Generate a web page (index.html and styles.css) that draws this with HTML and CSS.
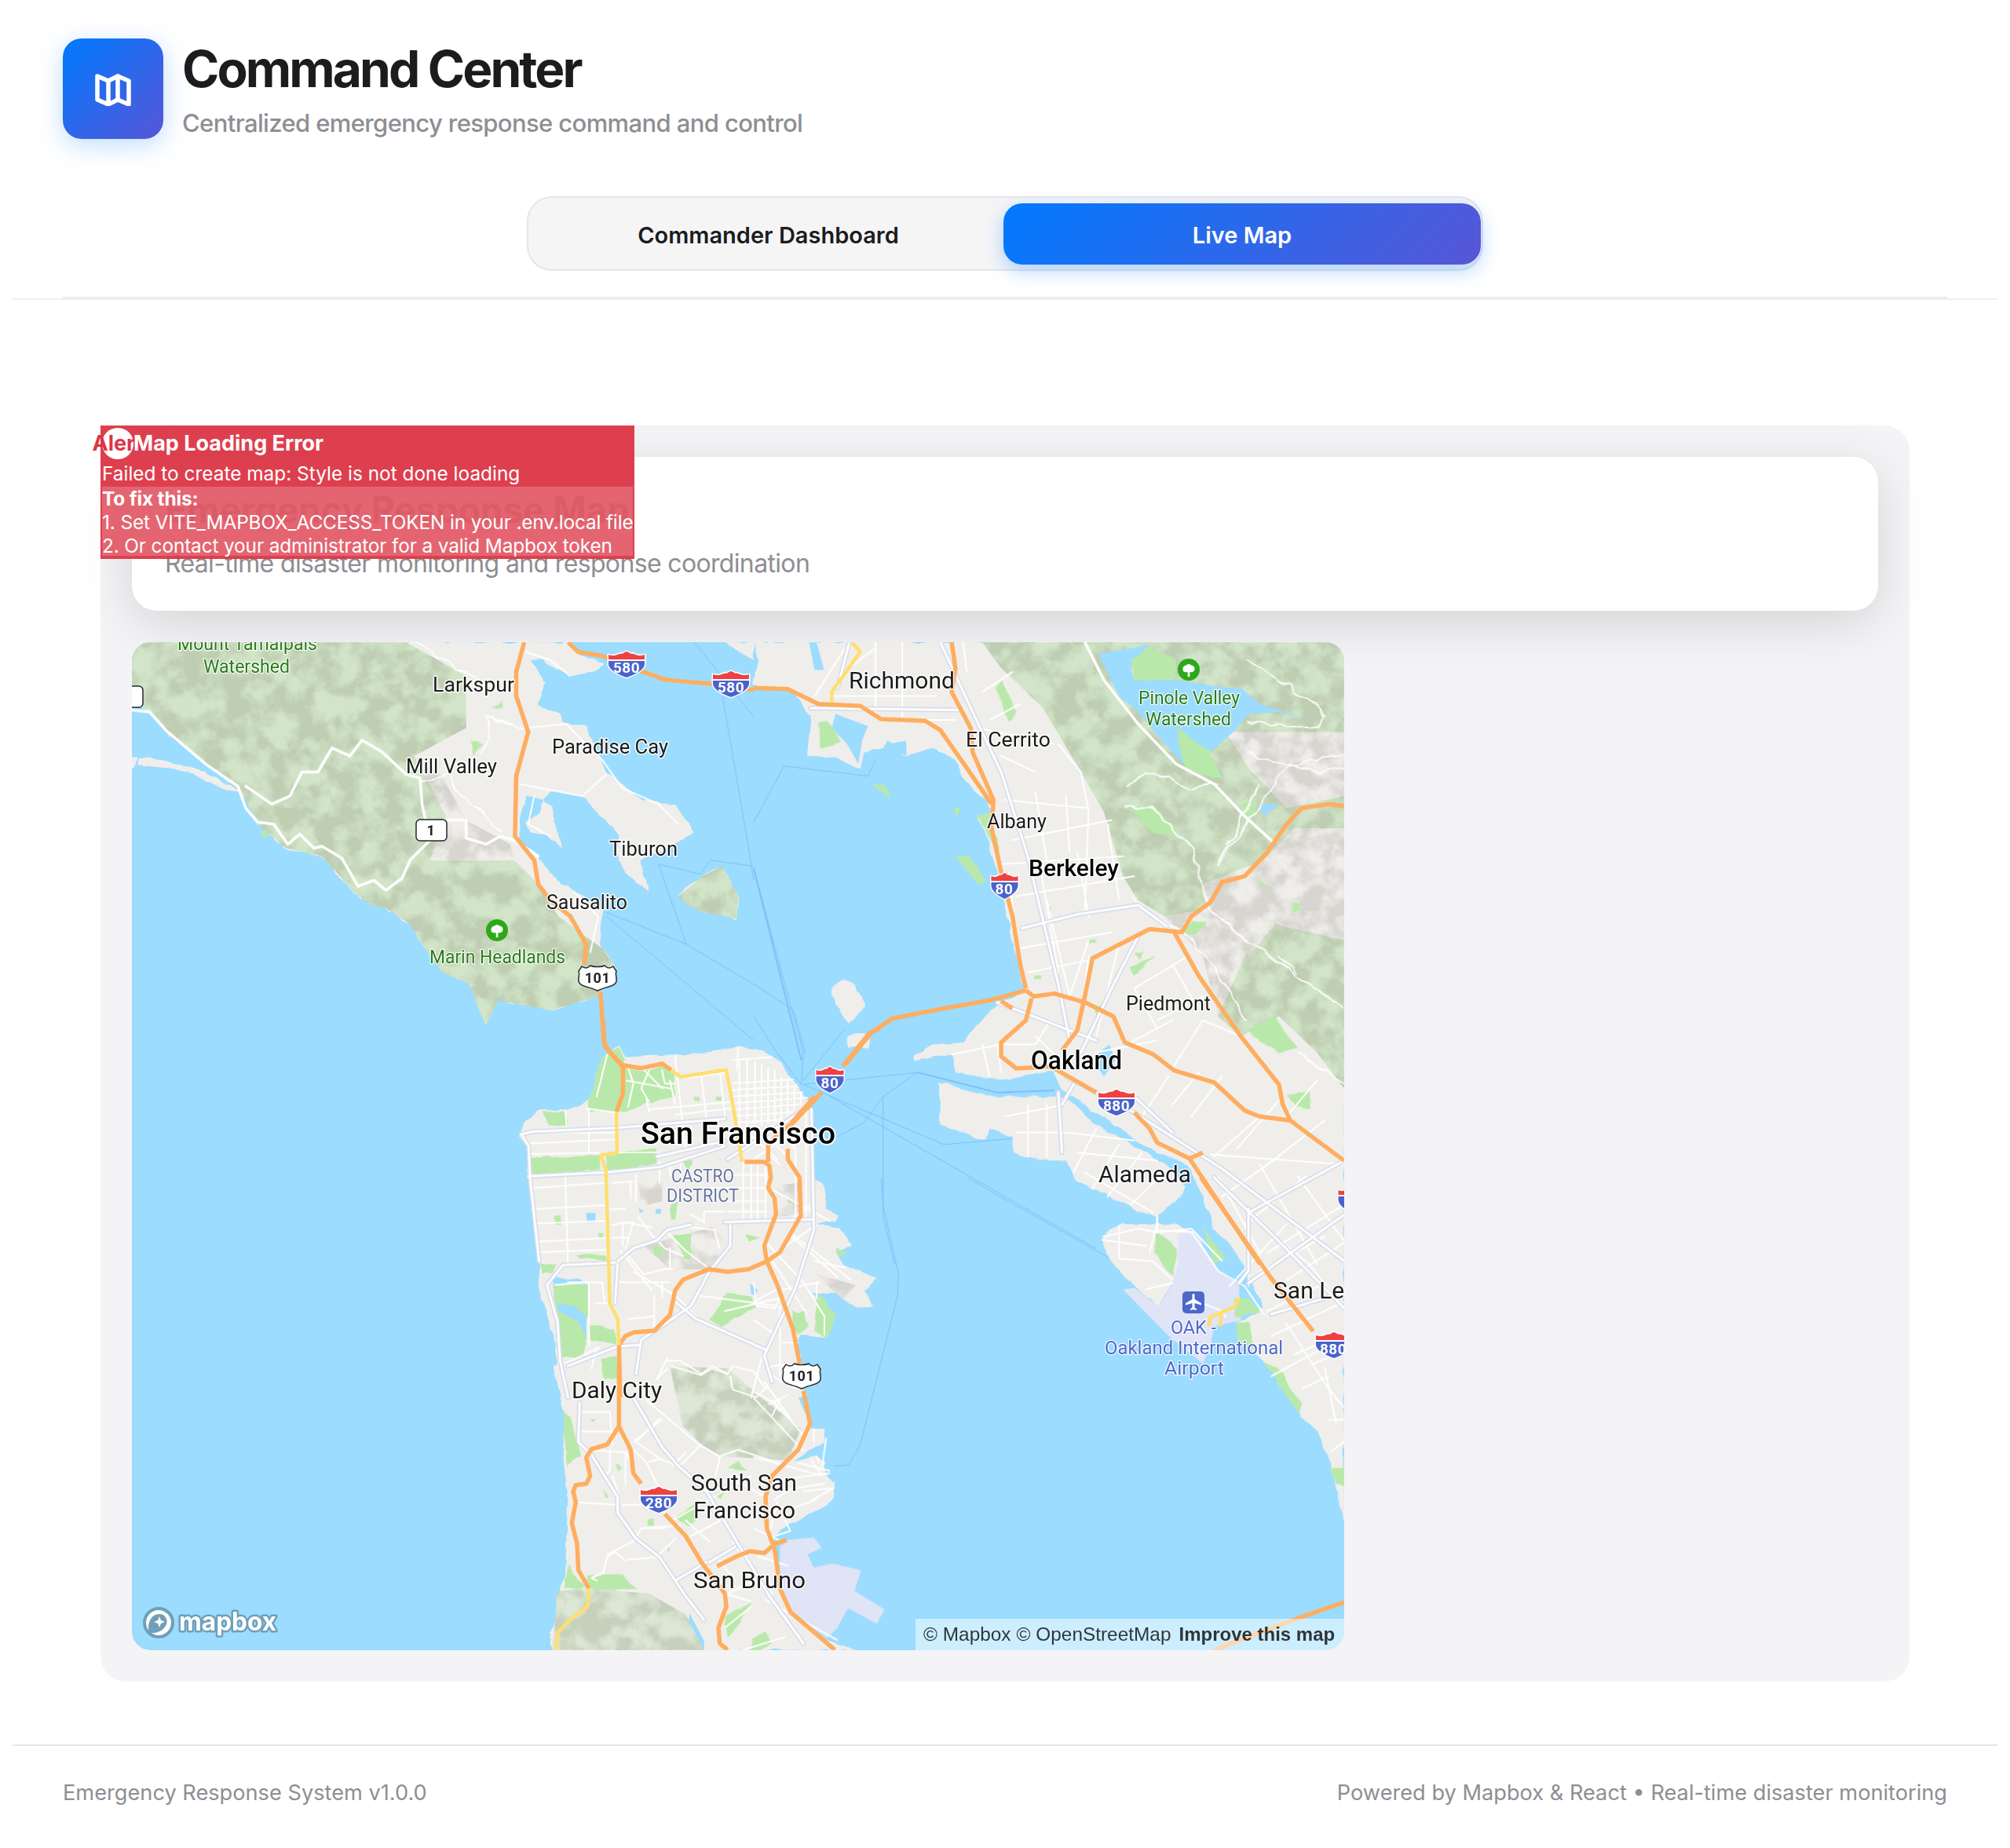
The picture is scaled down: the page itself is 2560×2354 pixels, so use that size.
FILE: index.html
```html
<!DOCTYPE html>
<html lang="en">
<head>
<meta charset="utf-8">
<title>Command Center</title>
<link rel="stylesheet" href="styles.css">
</head>
<body>
<div class="top">
  <header class="head">
    <div class="brand">
      <div class="logo">
        <svg class="logo-ico" viewBox="0 0 48 44"><path d="M4 6l14 6 12-6 14 6v30l-14-6-12 6-14-6z"/><path d="M18 12v30M30 6v30"/></svg>
      </div>
      <div class="brand-text">
        <h1 class="title">Command Center</h1>
        <p class="subtitle">Centralized emergency response command and control</p>
      </div>
    </div>
    <nav class="tabs">
      <button class="tab">Commander Dashboard</button>
      <button class="tab tab-on">Live Map</button>
    </nav>
  </header>
</div>

<main class="main">
  <section class="panel">
    <div class="error">
      <div class="error-head"><span class="error-badge">Alert</span><strong class="error-title">Map Loading Error</strong></div>
      <p class="error-msg">Failed to create map: Style is not done loading</p>
      <div class="error-help">
        <strong>To fix this:</strong>
        <div>1. Set VITE_MAPBOX_ACCESS_TOKEN in your .env.local file</div>
        <div>2. Or contact your administrator for a valid Mapbox token</div>
      </div>
    </div>
    <div class="card">
      <h2 class="card-title">Emergency Response Map</h2>
      <p class="card-sub">Real-time disaster monitoring and response coordination</p>
    </div>
    <div class="map">
      <svg class="map-svg" viewBox="168 818 1544 1284" xmlns="http://www.w3.org/2000/svg">
        <defs>
          <filter id="shade" filterUnits="userSpaceOnUse" x="168" y="818" width="1544" height="1284" color-interpolation-filters="sRGB">
            <feTurbulence type="fractalNoise" baseFrequency=".035" numOctaves="4" seed="7"/>
            <feColorMatrix values="0 0 0 0 .40  0 0 0 0 .38  0 0 0 0 .32  3 0 0 0 -.95"/>
            <feComponentTransfer><feFuncA type="discrete" tableValues="0 .02 .05 .08 .11 .14 .18"/></feComponentTransfer>
            <feComposite in2="SourceAlpha" operator="in"/>
          </filter>
          <filter id="rough" filterUnits="userSpaceOnUse" x="168" y="818" width="1544" height="1284" color-interpolation-filters="sRGB">
            <feTurbulence type="fractalNoise" baseFrequency=".05" numOctaves="2" seed="2" result="n"/>
            <feDisplacementMap in="SourceGraphic" in2="n" scale="7" xChannelSelector="R" yChannelSelector="G"/>
          </filter>
          <filter id="wiggle" filterUnits="userSpaceOnUse" x="168" y="818" width="1544" height="1284" color-interpolation-filters="sRGB">
            <feTurbulence type="fractalNoise" baseFrequency=".04" numOctaves="2" seed="11" result="n"/>
            <feDisplacementMap in="SourceGraphic" in2="n" scale="16" xChannelSelector="R" yChannelSelector="G"/>
          </filter>
          <g id="woodNW" class="t-nw"><path d="M16,16H700L850,100 850,230 720,300 800,450 760,560 970,560 1020,610 1080,700 1190,780 1225,830 1180,900 1110,920 1060,935 930,910 900,970 880,930 860,870 790,840 740,770 710,720 650,680 610,670 570,640 490,550 400,530 330,470 290,390 200,320 110,250 60,185 16,170Z"/><path d="M1380,650L1440,600 1490,575 1530,650 1525,705 1440,690 1400,670Z"/></g>
          <g id="woodNE" class="t-ne"><path d="M600,16H1551V1130L1480,1040 1380,950 1280,1000 1220,950 1180,800 1080,700 1010,660 970,600 920,440 860,340 760,180 650,80Z"/></g>
          <g id="woodS" class="t-s"><path d="M640,0L860,10 1000,130 1140,240 1090,360 830,345 760,300 690,230 660,100Z"/><path d="M210,860L330,850 560,870 700,950 770,1085H190Z"/></g>
          <symbol id="ishield" viewBox="0 0 50 37" preserveAspectRatio="none">
            <path class="sh-w" d="M1,5C7,7 12,6 17,3 20,5 22,1 25,1 28,1 30,5 33,3 38,6 43,7 49,5V18C49,26 36,32 25,36 14,32 1,26 1,18Z"/>
            <path class="sh-r" d="M2,6C7,8 12,7 17,4.500 20,6 22,2 25,2 28,2 30,6 33,4.500 38,7 43,8 48,6V12H2Z"/>
            <path class="sh-b" d="M2,14H48V18C48,25 36,31 25,35 14,31 2,25 2,18Z"/>
          </symbol>
          <symbol id="ushield" viewBox="0 0 52 36">
            <path class="sh-u" d="M6,3C10,6 14,5 17,2 21,4 31,4 35,2 38,5 42,6 46,3L50,9C48,13 51,17 50,22 49,29 35,29 26,34 17,29 3,29 2,22 1,17 4,13 2,9Z"/>
          </symbol>
          <symbol id="park-ico" viewBox="0 0 30 30">
            <circle class="ico-green" cx="15" cy="15" r="14"/>
            <path class="ico-white" d="M13.700 24V18C10 19 7 17.500 7.500 14.500 7 11.500 10 9.500 12 9.500 13 7.500 17 7.500 18 9.500 21 9.500 23 12 22.500 14.500 22.500 17.500 19 19 16.300 18V24Z"/>
          </symbol>
        </defs>

        <!-- land -->
        <g class="land" filter="url(#rough)">
          <g class="t-nw">
            <path d="M16,16H1100L1150,55 1200,65 1170,90 1110,100 1040,60 1010,60 1050,120 1030,170 1080,195 1090,215 1150,225 1200,340 1290,410 1370,420 1420,490 1390,510 1285,565 1305,640 1250,590 1225,540 1230,495 1140,400 1070,385 1040,410 1065,430 1090,530 1050,500 1010,490 1000,470 1030,440 1045,410 1000,395 985,450 985,510 1030,550 1060,590 1090,620 1130,640 1190,690 1185,770 1225,830 1180,900 1110,920 1060,935 930,910 900,970 880,930 860,870 790,840 740,770 710,720 650,680 610,670 570,640 490,550 400,530 330,470 290,390 200,320 110,250 60,185 16,170Z"/>
            <path d="M30,305L100,310 200,340 290,390 250,385 150,335 30,322Z"/>
            <path d="M16,298L28,300 24,325 16,332Z"/>
            <path d="M1380,650L1440,600 1490,575 1530,650 1525,705 1440,690 1400,670Z"/>
            <path d="M1500,16H1568V60L1530,40Z"/>
          </g>
          <g class="t-ne">
            <path d="M0,110L10,60 0,16H1551V1568H1300L1210,1480 1180,1400 1140,1320 1040,1280 900,1190 810,1130 790,1085 650,1110 530,1090 520,1045 425,1062 420,1050 470,1020 550,1015 600,955 650,915 710,885 690,800 660,680 640,590 610,500 585,455 625,440 610,410 560,370 530,310 470,280 400,300 350,265 340,280 290,290 280,330 200,300 140,300 150,200 100,135 0,125Z"/>
            <path d="M485,1115L630,1150 800,1150 830,1160 900,1220 1030,1290 1100,1330 1130,1380 1120,1400 1060,1450 1000,1430 850,1360 820,1310 750,1310 680,1290 680,1250 620,1230 610,1260 490,1220Z"/>
            <path d="M205,880L235,860 265,870 295,925 250,970 215,920Z"/>
            <path d="M245,1000L305,990 300,1030 250,1030Z"/>
          </g>
          <g class="t-sf">
            <path d="M380,140L440,100 470,140 650,130 800,120 900,100 1000,115 1060,160 1130,250 1180,330 1190,560 1195,610 1225,620 1240,720 1280,740 1270,765 1190,780 1280,790 1340,860 1280,880 1300,930 1430,985 1380,1030 1420,1090 1350,1100 1270,1040 1190,1040 1215,1070 1270,1130 1240,1210 1140,1200 1120,1230 1140,1310 1160,1440H230L190,1190 135,1010 140,920 100,590 95,480 65,435 80,390 140,345 240,345 330,310Z"/>
          </g>
          <g class="t-s">
            <path d="M195,0L240,200 230,340 250,500 240,800 210,860 215,960 180,1020 190,1085H1350L1220,1040 1130,950 1090,940 1060,850 1040,650 1090,610 1140,590 1260,510 1270,450 1225,395 1230,360 1200,345 1110,365 1175,320 1230,295 1230,240 1180,240 1175,210 1130,120 1085,120 1070,95 1160,0Z"/>
          </g>
          <g class="t-se">
            <path d="M1180,0L1210,110 1205,130 1290,290 1340,420 1290,460 1265,470 1310,560 1340,590 1440,770 1480,820 1510,900 1551,1110V0Z"/>
            <path d="M915,190L965,150 1115,150 1160,175 1220,300 1230,320 1115,340 1100,340 1065,415 990,340 935,260Z"/>
          </g>
        </g>

        <!-- inland water -->
        <g class="water">
          <g class="t-ne">
            <path d="M145,16H165L185,85 160,85Z"/>
            <path d="M215,195L300,225 285,260 275,320 245,270 205,230Z"/>
            <path d="M350,270L400,262 402,298 365,290Z"/>
          </g>
          <g class="t-s"><path d="M715,945L770,1050V1085H720L705,1040Z"/></g>
        </g>

        <!-- airports -->
        <g class="air">
          <g class="t-s"><path d="M1060,690L1090,665 1190,655 1220,695 1165,720 1190,770 1260,755 1370,780 1345,860 1460,930 1430,985 1320,925 1280,1000 1240,1040 1100,940 1060,850Z"/></g>
          <g class="t-se"><path d="M1115,180L1160,175 1220,300 1275,345 1280,460 1210,480 1200,540 1180,600 1090,510 970,360 1000,355 1065,415 1100,340 1115,280Z"/></g>
        </g>

        <!-- woods and hillshade -->
        <g class="wood"><use href="#woodNW"/><use href="#woodNE"/></g>
        <g class="wood-l"><use href="#woodS"/></g>
        <g class="land">
          <g class="t-ne">
            <path d="M1180,620L1340,560 1380,640 1300,780 1220,950 1170,830 1080,700 1200,680Z"/>
            <path d="M1240,240H1551V400L1400,430 1300,330Z"/>
            <path d="M1420,480H1551V760L1370,720 1300,800 1210,640 1300,600Z"/>
          </g>
          <g class="t-nw"><path d="M790,350L850,460 960,520 970,560 760,560 800,450Z"/></g>
        </g>

        <g class="shade-src" filter="url(#shade)">
          <use href="#woodNW"/><use href="#woodNE"/><use href="#woodS"/>
          <g class="t-sf"><path d="M520,620L610,600 610,690 530,710Z"/><path d="M540,860L800,790 860,850 790,950 640,950Z"/><path d="M1050,630L1130,620 1130,740 1050,750Z"/><path d="M1200,970L1350,1010 1300,1070Z"/></g>
          <g class="t-nw"><path d="M700,16L850,100 850,230 720,300 790,350 850,460 960,520 970,560 760,560 720,300Z"/></g>
        </g>

        <g class="water">
          <g class="t-ne">
            <path d="M905,45L1000,30 1040,20 990,80 1000,110 1110,110 1240,130 1280,130 1330,170 1460,210 1380,190 1300,195 1260,240 1200,290 1130,320 1080,270 1010,190 960,150Z"/>
            <path d="M905,1040L935,1020 950,1060 920,1100 905,1080Z"/>
            <path d="M1330,420L1380,420 1340,450Z"/>
          </g>
        </g>

        <!-- parks -->
        <g class="park" filter="url(#rough)">
          <g class="t-sf">
            <path d="M380,140L440,105 470,150 460,180 530,190 610,175 655,200 660,290 550,315 460,350 330,345 330,310Z"/>
            <path d="M155,350L240,350 250,405 180,400Z"/>
            <path d="M105,525L370,515 375,570 190,585 115,590Z"/>
            <path d="M395,515L590,490 590,545 400,575Z"/>
            <path d="M190,1010L330,1010 320,1220 215,1140Z"/>
            <path d="M215,1140L320,1215 310,1280 225,1290Z"/>
            <path d="M335,1160L430,1180 430,1240 335,1220Z"/>
            <path d="M380,1290L440,1280 440,1370 380,1365Z"/>
            <path d="M790,1140L860,1040 950,1050 970,1100 920,1120 840,1170Z"/>
            <path d="M1100,1130L1150,1110 1170,1170 1130,1200Z"/>
            <path d="M1200,1060L1275,1130 1240,1210 1190,1190Z"/>
            <path d="M655,820L720,810 720,910 690,910Z"/>
            <path d="M690,530L730,535 710,570 690,565Z"/>
            <path d="M570,865L615,860 610,895 585,900Z"/>
            <path d="M140,925L210,930 190,965 145,965Z"/>
            <path d="M280,895L400,895V915H300Z"/>
            <path d="M925,815L985,830 940,845Z"/>
            <path d="M730,295H750V310H730ZM815,290H838V303H815ZM200,745H225V780H200ZM1090,675H1103V695H1090ZM365,815H380V830H365ZM640,710L670,690 660,760 640,760Z"/>
          </g>
          <g class="t-s">
            <path d="M230,170L260,200 300,340 245,380Z"/>
            <path d="M250,760L320,850H235Z"/>
            <path d="M330,800L460,795 510,855H330Z"/>
            <path d="M660,580L730,530 745,590 710,610Z"/>
            <path d="M850,960L950,900 910,980 860,1040Z"/>
            <path d="M950,1040L1000,1010 1030,1060 980,1085H945Z"/>
            <path d="M860,390L900,360 935,405Z"/>
            <path d="M810,490L850,480 830,515Z"/>
            <path d="M330,200H355L345,215ZM555,590H578V610H555ZM625,695L640,700 630,715ZM380,470L405,500 395,510ZM430,375L460,385 445,400Z"/>
          </g>
          <g class="t-nw">
            <path d="M1170,1170L1195,1040 1240,1070 1225,1190Z"/>
            <path d="M860,260L890,270 870,300Z"/>
            <path d="M915,180L945,160 940,180Z"/>
            <path d="M335,490L355,485 350,505Z"/>
          </g>
          <g class="t-ne">
            <path d="M530,550L565,548 610,610 590,620Z"/>
            <path d="M170,215L190,210 235,265 175,280Z"/>
            <path d="M1110,230L1200,290 1230,360 1180,350 1130,320Z"/>
            <path d="M990,60L1040,30 1110,60 1110,110 1000,110Z"/>
            <path d="M1290,985L1370,950 1425,1030 1380,1040Z"/>
            <path d="M1400,1145L1460,1135 1465,1180 1420,1175Z"/>
            <path d="M985,830L1055,800 1000,850Z"/>
            <path d="M985,430L1060,430 1120,500 1050,490Z"/>
            <path d="M635,130L655,110 690,190 670,215Z"/>
            <path d="M585,450L620,440 650,560 620,510Z"/>
            <path d="M1150,710L1190,715 1160,750 1135,745Z"/>
            <path d="M1280,420L1310,410 1320,450 1290,445Z"/>
            <path d="M310,370L340,372 360,405 330,390Z"/>
            <path d="M525,430L545,435 530,455Z"/>
            <path d="M895,930L915,920 905,950ZM1000,790L1020,785 1015,810ZM770,680L780,680 778,700ZM735,850H755V860H735ZM880,760H900V770H880ZM1320,610L1345,620 1340,635ZM1415,665H1435V685H1415Z"/>
          </g>
          <g class="t-se">
            <path d="M1060,170L1115,230 1100,320 1050,240Z"/>
            <path d="M1340,590L1380,620 1440,730 1430,760Z"/>
            <path d="M1515,935H1551V1000L1530,990Z"/>
            <path d="M1265,470L1300,470 1320,560 1270,530Z"/>
            <path d="M1260,385L1300,390 1335,430 1265,450Z"/>
            <path d="M1180,160L1240,260 1210,280Z"/>
            <path d="M170,370L215,440 190,510Z"/>
            <path d="M95,430L145,470 115,490Z"/>
            <path d="M220,225L250,240 225,250Z"/>
          </g>
        </g>
        <g class="water">
          <g class="t-sf">
            <path d="M190,975L250,990 290,985 325,1010 250,1003 195,1015Z"/>
            <path d="M205,1080L270,1090 320,1130 320,1210 290,1150 215,1110Z"/>
            <path d="M320,735H355V770H322ZM945,1005L975,1030 965,1050 950,1045ZM520,715L540,730 525,735ZM585,720H605V738H585Z"/>
          </g>
        </g>

        <!-- ferry lines -->
        <g class="ferry">
          <g class="t-nw"><path d="M1490,150L1550,500 1568,610M1330,570L1400,770 1568,870M1200,690L1400,770M1200,700L1568,1010M1330,570L1435,595 1460,560 1568,575M1420,16L1550,180 1568,200"/></g>
          <g class="t-ne"><path d="M0,580L130,1040 125,1120M0,870L105,935 135,1040M0,950L60,1040 125,1120M240,980L130,1110M130,1120L430,1090 640,1140 790,1135M130,1120L500,1270 680,1255M200,1150L900,1530M430,1090L340,1150 290,1215 220,1250M340,1150V1450L370,1568M0,465L80,325 300,350 320,310"/></g>
          <g class="t-se"><path d="M560,0L935,260M335,0L340,90 380,310 378,380 280,860 250,925 210,930"/></g>
        </g>
        <g class="ferry-bold"><g class="t-ne"><path d="M0,580L125,1060M430,1090L640,1140 790,1135"/></g></g>

        <!-- winding hill roads -->
        <g class="minor" filter="url(#wiggle)">
          <g class="t-nw">
            <path d="M735,360L800,350 860,420 940,490M1000,235L900,200 910,250 880,300M720,16L900,120 970,140"/>
          </g>
          <g class="t-ne">
            <path d="M980,370L1040,340 1150,380 1220,370M980,430L1050,430 1150,530 1200,680 1300,770 1400,830 1551,930M1375,800L1430,840M1220,570L1400,330 1550,290M1300,60L1480,170 1500,200 1480,230 1400,225 1300,215M1300,290L1470,340 1551,330M1000,660L1160,770 1300,960M1430,1040L1551,1120M1250,520L1330,370"/>
          </g>
        </g>

        <!-- minor roads -->
        <g class="minor">
          <g class="t-nw">
            <path class="hwy" d="M16,185L60,190 100,235 200,320 280,375 300,430 330,465 370,470 405,520 435,495 470,530 490,525 540,555 580,625 620,610 650,635 690,605 710,560 760,510 740,420 735,355 700,345 640,290 590,260 560,300 515,280 480,340 440,340 410,400 365,420 300,375"/>
            <path class="hwy" d="M800,460L850,460 850,505 900,520 935,500 970,510 1030,550"/>
            <path d="M1000,230L1100,220 1190,310 1240,380 1330,420 1380,470M985,370L1140,400 1200,345M1020,400L1005,470 1060,500M1110,100L1060,60 1000,40"/>
            <path d="M1120,640L1180,700 1160,790M1290,1080L1340,1130M1250,1110L1360,1130M1150,1180L1225,1190M1000,1240H1225M1230,1290L1330,1290"/>
          </g>
          <g class="t-ne">
            <path class="hwy" d="M870,16L920,110 1010,220 1110,320 1210,370 1290,450 1365,515"/>
            <path d="M160,150L240,30M250,80L320,30M320,16V200M390,16V220M340,210H530M210,150H480M550,16L560,90M600,140L680,90M620,210L700,170M650,300L740,340M590,230L790,270M800,270L860,340M660,410L880,430M680,510L940,460M650,570L970,550M690,650L1000,600M670,590L700,830M750,560L800,840M850,540L880,700M930,470L960,660M740,390L770,560M820,400L830,540M860,340L880,440M880,430L870,690"/>
            <path d="M700,780L940,740M720,840L880,810M770,660L830,900M830,900L880,760M880,800L860,960M960,770L900,1000M1000,880L1140,800M1000,880L1060,980M1060,960L1180,900M1100,820L1160,920M980,1020L1100,960M1100,1080L1180,960M1180,960L1280,1000"/>
            <path d="M520,1045L650,1020 740,1020M600,1020L620,1100M640,1020L650,1090M740,1020L780,960M740,1000L820,1070M900,1040L1060,1010M1020,1200L1090,1100M1100,1170L1170,1090M1150,1200L1230,1100M1210,1300L1330,1200M1270,1280L1380,1160M1400,1200L1480,1110M1350,1320L1500,1210M1200,1295L1551,1320"/>
            <path d="M660,1200L820,1170M690,1240H820M720,1170V1300M770,1170V1300M820,1240L1000,1260M850,1290L1060,1310M900,1230L840,1340M960,1270L890,1380M1020,1290L930,1400M1080,1340L990,1420M870,1340L1050,1440M1060,1450V1490L1150,1480 1230,1560M920,1500L1010,1480 1060,1490M1230,1400L1380,1300M1290,1470L1450,1350M1350,1540L1551,1420M1220,1350L1330,1540M1330,1320L1480,1568M1430,1350L1551,1510"/>
          </g>
          <g class="t-sf">
            <path d="M100,470L430,455M100,510L370,505M110,640L400,620M120,720L400,705M130,775L400,765M140,845L410,830M140,885L410,875M240,600L250,930M330,340V500M240,345L245,400M420,620L500,615M510,590V690M490,620V680M410,720H470M420,830L480,830M420,780L490,770M460,770V860M500,770L470,870"/>
            <path d="M660,140L700,500M760,210L780,380M830,190L850,370M560,340L880,310M660,360L880,335M700,220L850,200M550,300L560,350M640,230L660,320M480,180L500,240 480,330M560,190L530,260 560,310M610,190L620,240 660,240M400,130L360,290M880,150L1030,140M900,110L895,190"/>
            <path d="M880,240L1110,225M880,265L1125,250M885,290L1145,275M885,315L1165,295M885,340L1140,320M888,365L1110,350M890,390L1060,380M905,150V400M935,150V400M965,160V390M990,170V400M1015,180V390M1040,190V390M1065,220V380M1090,230V360M1115,250V340M1140,280V320"/>
            <path d="M950,440L1050,530M990,420L1080,510M1030,400L1120,490M930,500L1060,400M960,530L1110,420M1000,500L1060,550M1120,500V770M1160,350V760"/>
            <path d="M920,540V770M950,540V770M975,540V770M1005,540V770M860,590H1010M860,640H1010M860,690H1010M860,730H1010M770,640H860M770,730V770M600,540V620M640,540V590M680,530V590M720,740L770,770M770,730H850"/>
            <path d="M450,880L570,1030M480,900L540,970 620,950 650,950M520,750L570,820 620,870 690,900M620,800L700,880 780,940M720,790L810,800 830,870M640,870L640,950M460,770L570,790M500,960L660,1050 740,1130M430,1000H640M610,1000V1060M580,1050V1170M1040,890L1200,780M1000,840L1150,1000 1230,1130 1230,1200M1110,820L1330,990M1060,1030L1210,1000M1200,1000L1200,1060M960,1000L970,1090 1040,1100 1060,1060M850,1110L1060,1060M740,1050L1050,1090M360,1080H430M250,1000L380,1000 390,1080M200,1010L330,1000 330,1240M480,1140L580,1130M360,1250L340,1330M240,1310L370,1250"/>
            <path d="M630,1290L590,1370M630,1300L680,1300 760,1350 800,1320 860,1350 880,1320 960,1340 1000,1400M1070,1230H1130M1060,1230V1340 1090,1360M950,1440L990,1290 1060,1140"/>
          </g>
          <g class="t-s">
            <path d="M630,10L590,50M640,0L680,10 760,35 800,10 860,30M870,40L880,90 970,120 1010,80M1000,60L1100,200M1030,130L1060,170M1030,190L1060,130M550,130L750,300 830,345 900,320 1070,375M600,200L510,290 610,360 670,380M760,300L680,380M700,330L650,380M830,350L810,440M870,420L1000,500M1130,370L1250,400M1230,450L1100,470 1040,510M1200,510L1120,540M300,175L410,175 420,300M300,250H420M310,320L470,330 490,360M410,320V400L390,420M280,520L430,530M420,420L450,510M470,330V450M460,530L590,530 650,590 860,470 950,420M500,290L610,205M560,365L610,355M500,320L550,370 600,470M530,620L680,610M400,720L500,670 530,620 620,620M470,745L430,710 400,730 385,790 340,810 360,820M480,740L590,730M590,730L660,660M720,650L890,560M880,670L890,700M810,740L870,690M890,690L1030,870M820,730L880,810M935,720L1000,860M700,590L790,670M860,870L1000,800M850,870L950,900M1010,440L1250,410M1190,240V290M1210,370L1200,345M1050,520L1020,640M1080,590L1100,630 1040,650M850,1000L950,920M920,1085L1080,1035"/>
          </g>
          <g class="t-se">
            <path d="M1060,120V170L1150,175 1220,300 1290,350 1340,440M960,155L960,260 1050,270 1100,330M1030,360L1100,340M1060,150L1040,240M915,200L1030,220M1170,400L1230,430 1240,450M1300,350L1300,100M1250,350L1400,150M1330,300L1500,190M1400,330L1551,210M1300,120L1460,280 1551,420M1350,430L1500,340M1360,510L1551,400M1400,470L1510,680 1551,740M1420,570L1551,500M1470,600L1551,560M1440,680L1510,640M1520,880L1551,850M1510,780H1551M1500,610L1530,790M1360,640L1480,560"/>
            <path d="M60,130L20,220 60,290 140,440M0,400L60,360M0,460L50,500 25,590 50,640 110,680M50,40L200,140M90,140L150,90M100,190L220,320M160,270L240,290M40,610L90,600M0,690L60,730 110,800 130,830M0,710L130,880M40,730L90,700M0,900L180,960 150,910M180,930L190,840M130,1010L210,1000 150,1040M0,1130L70,1170M10,1220L90,1250M30,1360L220,1490"/>
          </g>
        </g>

        <!-- secondary roads -->
        <g id="secondary">
          <g class="casing">
            <g id="sec-shape">
              <g class="t-sf"><path d="M70,435L110,425 440,410 850,375M100,595L400,580 600,560 850,480M75,440L100,480 105,600 140,920M230,935L170,1010 210,1150 220,1300 250,1440M230,935L430,925M440,930L430,1080M440,920L500,870 590,840 630,800 720,780M1180,340L1190,800 1120,1020 1000,1280 1030,1380M850,770L1180,760M870,780V860L790,960 720,1090 620,1160 530,1220 510,1350M660,1075L740,1140 1010,1260M250,1320L440,1245 520,1240M1170,330L860,530M590,520L850,460"/></g>
              <g class="t-s"><path d="M295,140L290,290 340,340 440,500 440,560 510,660 600,730 700,880 770,970M500,120L610,310 670,380 780,480 900,680 1020,880 1150,1060M790,750L890,690M660,820L780,750"/></g>
              <g class="t-ne"><path d="M490,16L580,200 650,340 720,550 800,870 830,1010M705,730L850,695 1010,672 1085,725M640,915L830,985 900,1010M1010,750L940,880 860,1040M820,1100L1000,1190 1230,1330 1551,1560M800,1140L810,1290M840,1120L810,1170M1300,1440L1551,1310M150,180L540,185M220,130L250,20M1000,1150L1100,1240"/></g>
              <g class="t-se"><path d="M1300,100V300L1275,340M1210,0L1400,230 1551,420M1300,340L1551,120M1360,440L1551,370"/></g>
            </g>
          </g>
          <g class="fill"><use href="#sec-shape"/></g>
        </g>

        <!-- motorways -->
        <g class="moto">
          <g class="t-nw"><path d="M995,16L975,90 975,150 1005,240 975,350 972,500 1020,560 1030,620 1060,660 1110,700 1150,770 1145,820M1185,890L1195,1020 1240,1075"/><path d="M1105,16L1130,40 1190,50 1250,75 1350,110 1465,120 1568,135"/></g>
          <g class="t-ne"><path d="M0,130L90,133 170,170 280,175 335,208 450,212 490,235 560,330 625,420M520,16L530,80 520,140 570,230 575,290 630,410 625,480 650,590 680,700 700,820 715,880M715,885L620,910 500,930 365,955 310,990 240,1070M160,1150L100,1215M1550,425L1510,420 1440,430 1400,470 1350,540 1290,600 1230,615 1200,665 1150,700 1125,740 1040,732 890,805 870,900 850,985 810,1035M715,885L735,900 790,893 870,915 945,950 975,1015 1050,1045 1105,1085 1210,1115 1290,1185 1330,1200 1410,1210 1551,1310M1105,740L1170,850 1280,1000 1380,1120 1390,1170 1410,1210M730,905L715,960 650,1015 650,1050 690,1080 780,1075 900,1140M1000,1190L1040,1230 1060,1265 1145,1305 1330,1568M1145,1305L1180,1290M650,912L680,930"/></g>
          <g class="t-sf"><path d="M385,0L390,95 430,145 460,170 530,182 610,165 645,190M460,170V280L435,350M925,540H1000L1020,555 1025,600 1015,640 1040,680 1045,740 1000,860 1010,920 1050,1010 1110,1180 1135,1310M445,1240L450,1440M445,1240L470,1205 500,1192 580,1185 640,1125 660,1030 690,990 790,950 860,960 940,950 1010,920 1060,885 1140,745 1135,600 1090,530 1090,490M1440,30L1400,50 1300,175M1220,275L1110,390 1040,445 1015,480 1015,540"/></g>
          <g class="t-s"><path d="M1150,95L1175,220 1130,320 1030,420 1005,500 1010,620 1040,700 1060,850 1100,940 1270,1085M820,765L900,725 945,708 1000,715 1040,680 1085,665M445,0V230L400,300 340,318 320,350 335,420 320,450 280,455 270,480 280,520 265,600 285,680 290,780 330,850M445,230L490,320 500,410 530,450M620,565L700,650 760,750 850,870 855,920 825,1000 830,1060 860,1085"/></g>
          <g class="t-se"><path d="M1175,0L1360,325 1470,495M1551,1368L1430,1420 1300,1480 1210,1522"/></g>
        </g>
        <g class="trunk">
          <g class="t-sf"><path d="M645,190L680,215 855,188 885,350 915,540M435,350L438,505 375,515 395,570 410,1080 440,1140 445,1240"/></g>
          <g class="t-s"><path d="M330,850L325,920 270,960 210,1020 205,1085"/></g>
          <g class="t-ne"><path d="M205,165V140L280,40 258,16"/></g>
          <g class="t-se"><path d="M1275,385L1265,415 1200,450 1195,480M1230,430L1225,480"/></g>
        </g>

        <!-- shields -->
        <use href="#ishield" x="773" y="828" width="50" height="37"/>
        <use href="#ishield" x="906" y="853" width="50" height="37"/>
        <use href="#ishield" x="1261" y="1110" width="37" height="37"/>
        <use href="#ishield" x="1038" y="1357" width="38" height="37"/>
        <use href="#ishield" x="1397" y="1386" width="50" height="37"/>
        <use href="#ishield" x="1703" y="1510" width="38" height="37"/>
        <use href="#ishield" x="1674" y="1695" width="50" height="37"/>
        <use href="#ishield" x="814" y="1892" width="50" height="37"/>
        <use href="#ushield" x="735" y="1228" width="52" height="36"/>
        <use href="#ushield" x="995" y="1735" width="52" height="36"/>
        <rect class="sh-ca" x="530" y="1044" width="39" height="27" rx="5"/>
        <rect class="sh-ca" x="150" y="874" width="32" height="27" rx="5"/>

        <g class="sh-t-w">
          <text x="798" y="857">580</text>
          <text x="931" y="882">580</text>
          <text x="1279" y="1139">80</text>
          <text x="1057" y="1386">80</text>
          <text x="1422" y="1415">880</text>
          <text x="1698" y="1725">880</text>
          <text x="839" y="1921">280</text>
        </g>
        <g class="sh-t-k">
          <text x="761" y="1252">101</text>
          <text x="1021" y="1759">101</text>
          <text class="sh-t-s" x="549" y="1064">1</text>
        </g>

        <!-- poi icons -->
        <use href="#park-ico" x="618" y="1170" width="30" height="30"/>
        <use href="#park-ico" x="1499" y="838" width="30" height="30"/>
        <rect class="ico-air" x="1506" y="1645" width="28" height="28" rx="5"/>
        <path class="ico-white" d="M1518.500,1649C1518.500,1647.500 1521.500,1647.500 1521.500,1649V1655L1530,1660V1662.500L1521.500,1660V1665.500L1524,1667.500V1669L1520,1668 1516,1669V1667.500L1518.500,1665.500V1660L1510,1662.500V1660L1518.500,1655Z"/>

        <!-- labels -->
        <g class="lb">
          <text x="226" y="828" class="lb-g" textLength="178" lengthAdjust="spacingAndGlyphs">Mount Tamalpais</text>
          <text x="259" y="857" class="lb-g" textLength="110" lengthAdjust="spacingAndGlyphs">Watershed</text>
          <text x="551" y="881" class="lb-s" textLength="104" lengthAdjust="spacingAndGlyphs">Larkspur</text>
          <text x="703" y="960" class="lb-s" textLength="148" lengthAdjust="spacingAndGlyphs">Paradise Cay</text>
          <text x="517" y="985" class="lb-s" textLength="116" lengthAdjust="spacingAndGlyphs">Mill Valley</text>
          <text x="776" y="1090" class="lb-s" textLength="87" lengthAdjust="spacingAndGlyphs">Tiburon</text>
          <text x="696" y="1158" class="lb-s" textLength="103" lengthAdjust="spacingAndGlyphs">Sausalito</text>
          <text x="547" y="1227" class="lb-g" textLength="173" lengthAdjust="spacingAndGlyphs">Marin Headlands</text>
          <text x="855" y="1506" class="lb-d" textLength="80" lengthAdjust="spacingAndGlyphs">CASTRO</text>
          <text x="849" y="1531" class="lb-d" textLength="92" lengthAdjust="spacingAndGlyphs">DISTRICT</text>
          <text x="1081" y="877" class="lb-m" textLength="135" lengthAdjust="spacingAndGlyphs">Richmond</text>
          <text x="1230" y="951" class="lb-s" textLength="108" lengthAdjust="spacingAndGlyphs">El Cerrito</text>
          <text x="1257" y="1055" class="lb-s" textLength="76" lengthAdjust="spacingAndGlyphs">Albany</text>
          <text x="1310" y="1116" class="lb-b" textLength="115" lengthAdjust="spacingAndGlyphs">Berkeley</text>
          <text x="1434" y="1287" class="lb-s" textLength="108" lengthAdjust="spacingAndGlyphs">Piedmont</text>
          <text x="1313" y="1362" class="lb-o" textLength="116" lengthAdjust="spacingAndGlyphs">Oakland</text>
          <text x="1399" y="1506" class="lb-m" textLength="118" lengthAdjust="spacingAndGlyphs">Alameda</text>
          <text x="1450" y="897" class="lb-g" textLength="129" lengthAdjust="spacingAndGlyphs">Pinole Valley</text>
          <text x="1459" y="924" class="lb-g" textLength="109" lengthAdjust="spacingAndGlyphs">Watershed</text>
          <text x="1622" y="1654" class="lb-m">San Leandro</text>
          <text x="1491" y="1699" class="lb-a" textLength="58" lengthAdjust="spacingAndGlyphs">OAK -</text>
          <text x="1407" y="1725" class="lb-a" textLength="227" lengthAdjust="spacingAndGlyphs">Oakland International</text>
          <text x="1483" y="1751" class="lb-a" textLength="76" lengthAdjust="spacingAndGlyphs">Airport</text>
          <text x="728" y="1781" class="lb-m" textLength="115" lengthAdjust="spacingAndGlyphs">Daly City</text>
          <text x="880" y="1899" class="lb-m" textLength="135" lengthAdjust="spacingAndGlyphs">South San</text>
          <text x="883" y="1934" class="lb-m" textLength="130" lengthAdjust="spacingAndGlyphs">Francisco</text>
          <text x="883" y="2023" class="lb-m" textLength="143" lengthAdjust="spacingAndGlyphs">San Bruno</text>
          <text x="816" y="1457" class="lb-x" textLength="248" lengthAdjust="spacingAndGlyphs">San Francisco</text>
        </g>

        <!-- mapbox logo -->
        <circle class="mb-ring" cx="202" cy="2067" r="18"/>
        <path class="mb-drop" d="M190,2080C187,2068 192,2056 203,2056 211,2056 214,2064 212,2069 209,2077 200,2081 190,2080Z"/>
        <path class="ico-white" d="M203,2059L205,2064 210,2066 205,2068 203,2073 201,2068 196,2066 201,2064Z"/>
        <text class="mb-word" x="228" y="2077" textLength="124" lengthAdjust="spacingAndGlyphs">mapbox</text>
      </svg>
      <div class="attrib"><span>© Mapbox</span><span>© OpenStreetMap</span><strong class="attrib-b">Improve this map</strong></div>
    </div>
  </section>
</main>

<footer class="foot">
  <span>Emergency Response System v1.0.0</span>
  <span>Powered by Mapbox &amp; React • Real-time disaster monitoring</span>
</footer>
</body>
</html>
```

FILE: styles.css
```css
* { box-sizing: border-box; }
html, body { background: #fff; }
body { margin: 0 16px; font-family: Inter, "Liberation Sans", sans-serif; color: #1c1c1e; height: 2354px; overflow: hidden; }

.top { border-bottom: 2px solid #efefef; }
.head { margin: 0 64px; padding-top: 49px; height: 380px; border-bottom: 2px solid #e9e9ea; }
.brand { display: flex; gap: 24px; height: 128px; }
.logo { width: 128px; height: 128px; border-radius: 24px; background: linear-gradient(135deg, #007aff, #5856d6); box-shadow: 0 8px 32px rgba(0,122,255,.25); display: flex; align-items: center; justify-content: center; }
.logo-ico { width: 48px; height: 44px; fill: none; stroke: #fff; stroke-width: 5.500; stroke-linejoin: round; stroke-linecap: round; }
.title { margin: 0; font-size: 64px; line-height: 78px; font-weight: 700; letter-spacing: -2.9px; color: #1c1c1e; }
.subtitle { margin: 10px 0 0; font-size: 31px; line-height: 40px; font-weight: 500; letter-spacing: -.62px; color: #8e8e93; }

.tabs { display: flex; width: 1218px; height: 95px; margin: 73px auto 0; padding: 7px 1px 6px 6px; border: 2px solid #e5e5ea; border-radius: 32px; background: #f5f5f6; }
.tab { flex: 1; border: 0; background: transparent; font: 600 29px Inter, sans-serif; color: #1c1c1e; border-radius: 24px; padding: 2px 0 0; }
.tab-on { flex: 0 0 608px; color: #fff; background: linear-gradient(135deg, #007aff, #5856d6); box-shadow: 0 8px 24px rgba(0,122,255,.3); }

.main { padding: 160px 112px 0; }
.panel { position: relative; height: 1600px; padding: 40px; border-radius: 32px; background: #f4f4f6; }

.error { position: absolute; left: 0; top: 0; z-index: 3; width: 680px; height: 170px; padding: 0 2px; background: rgba(220,53,69,.95); color: #fff; font-size: 24.400px; line-height: 30px; white-space: nowrap; }
.error-head { display: flex; align-items: center; height: 44px; padding-top: 2px; }
.error-badge { width: 40px; height: 40px; flex: none; border-radius: 50%; background: #fff; color: #dc3545; font-size: 27px; font-weight: 700; display: flex; align-items: center; justify-content: center; }
.error-title { font-size: 27px; font-weight: 700; }
.error-msg { margin: 2px 0 0; height: 30px; line-height: 30px; }
.error-help { margin-top: 2px; height: 88px; background: rgba(255,255,255,.2); letter-spacing: -.14px; }
.error-help strong { display: block; font-weight: 700; }

.card { height: 196px; padding: 38px 42px; border-radius: 32px; background: #fff; box-shadow: 0 16px 64px rgba(0,0,0,.13); }
.card-title { margin: 0; font-size: 46px; line-height: 58px; font-weight: 700; letter-spacing: -.2px; color: #1c1c1e; }
.card-sub { margin: 20px 0 0; font-size: 32px; line-height: 40px; letter-spacing: -.65px; color: #8e8e93; }

.map { position: relative; width: 1544px; height: 1284px; margin-top: 40px; border-radius: 24px; overflow: hidden; background: #9bdcff; }
.map-svg { display: block; width: 1544px; height: 1284px; }
.map-svg path { vector-effect: non-scaling-stroke; }

.t-nw { transform: translate(160px, 810px) scale(.5102); }
.t-ne { transform: translate(960px, 810px) scale(.4847, .5102); }
.t-sf { transform: translate(640px, 1300px) scale(.33333); }
.t-s  { transform: translate(640px, 1740px) scale(.33333); }
.t-se { transform: translate(960px, 1500px) scale(.4847, .3954); }

.land { fill: #f0eeeb; }
.water { fill: #9bdcff; }
.air { fill: #dfe4f6; }
.wood { fill: #d2e5c8; }
.wood-l { fill: #dce8d5; }
.shade-src { fill: #000; }
.park { fill: #b9e9aa; }
.ferry { fill: none; stroke: #7fc0f5; stroke-width: 1; }
.ferry-bold { fill: none; stroke: #82bff5; stroke-width: 2; }
.minor { fill: none; stroke: #fff; stroke-width: 2; stroke-linejoin: round; stroke-linecap: round; }
.hwy { stroke-width: 3.500; }
.casing { fill: none; stroke: #d2d9e8; stroke-width: 6; stroke-linejoin: round; stroke-linecap: round; }
.fill { fill: none; stroke: #fff; stroke-width: 3; stroke-linejoin: round; stroke-linecap: round; }
.moto { fill: none; stroke: #ffad5f; stroke-width: 5.500; stroke-linejoin: round; stroke-linecap: butt; }
.trunk { fill: none; stroke: #ffdf6e; stroke-width: 4.500; stroke-linejoin: round; }

.sh-w { fill: #fff; stroke: #fff; stroke-width: 1; }
.sh-r { fill: #ef4141; }
.sh-b { fill: #4a63cc; }
.sh-u { fill: #fff; stroke: #26282c; stroke-width: 1.500; }
.sh-ca { fill: #fff; stroke: #26282c; stroke-width: 1.500; }
.sh-t-w text { font: 700 19px Roboto, sans-serif; fill: #fff; text-anchor: middle; letter-spacing: .5px; }
.sh-t-k text { font: 700 18px Roboto, sans-serif; fill: #1f2124; text-anchor: middle; letter-spacing: .5px; }
.ico-green { fill: #2ea81b; }
.ico-white { fill: #fff; }
.ico-air { fill: #4c68c9; }

.lb text { font-family: Roboto, "Noto Sans", sans-serif; paint-order: stroke; stroke: rgba(255,255,255,.85); stroke-linejoin: round; }
.lb-s { font-size: 25px; fill: #1b1b1b; stroke-width: 3; }
.lb-m { font-size: 30px; fill: #1b1b1b; stroke-width: 3; }
.lb-b { font-size: 30px; font-weight: 500; fill: #000; stroke-width: 3; }
.lb-o { font-size: 33px; font-weight: 500; fill: #000; stroke-width: 3; }
.lb-x { font-size: 39px; font-weight: 500; fill: #000; stroke-width: 4; }
.lb-g { font-size: 23px; fill: #2a7c1a; stroke-width: 2.500; }
.lb-d { font-size: 23px; fill: #64749e; stroke-width: 2.500; }
.lb-a { font-size: 24px; fill: #4f68cb; stroke-width: 2.500; }

.mb-ring { fill: #fff; stroke: #6f9fb8; stroke-width: 4; }
.mb-drop { fill: #6f9fb8; }
.mb-word { font: 700 32px Inter, sans-serif; fill: #fff; stroke: #6f9fb8; stroke-width: 5; paint-order: stroke; stroke-linejoin: round; }

.attrib { position: absolute; right: 0; bottom: 0; width: 546px; height: 40px; padding: 0 10px; display: flex; align-items: center; gap: 7px; background: rgba(255,255,255,.5); border-bottom-right-radius: 24px; font: 24.400px "Liberation Sans", Arial, sans-serif; color: rgba(0,0,0,.78); white-space: nowrap; }
.attrib-b { margin-left: 3px; font-size: 24px; font-weight: 700; }

.foot { margin-top: 80px; padding: 0 64px; height: 120px; border-top: 2px solid #e5e5e5; display: flex; align-items: center; justify-content: space-between; font-size: 27.200px; color: #8e8e93; }
```
